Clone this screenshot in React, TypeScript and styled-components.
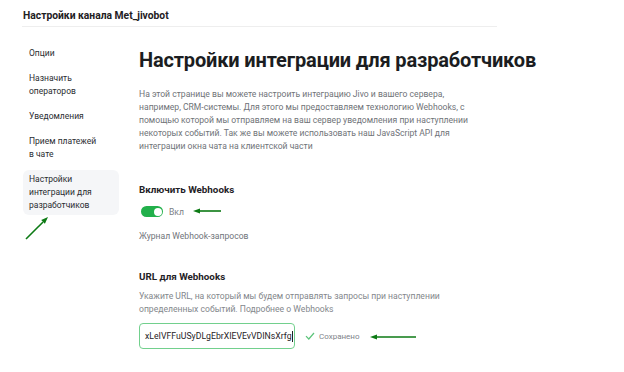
import styled, { createGlobalStyle } from 'styled-components';

const GlobalStyle = createGlobalStyle`
  html, body {
    margin: 0;
    padding: 0;
    background: #ffffff;
    font-family: Roboto, 'Liberation Sans', Arial, sans-serif;
  }
`;

const Page = styled.div`
  width: 624px;
  height: 372px;
  overflow: hidden;
  position: relative;
`;

const TopBar = styled.div`
  margin-left: 22px;
  width: 475px;
  height: 27px;
  box-sizing: border-box;
  padding: 10px 0 0 1px;
  border-bottom: 1px solid #eeeeee;
  font-size: 10.3px;
  line-height: 12px;
  font-weight: 700;
  color: #1e2023;
`;

const Body = styled.div`
  display: flex;
  gap: 20px;
  padding-left: 23px;
`;

const Sidebar = styled.nav`
  width: 96px;
  padding-top: 16.5px;
  display: flex;
  flex-direction: column;
  gap: 6px;
`;

const NavItem = styled.div<{ $active?: boolean }>`
  padding: 3px 6px;
  border-radius: 6px;
  font-size: 8.5px;
  line-height: 13px;
  color: #2a2d31;
  background: ${(p) => (p.$active ? '#f5f6f8' : 'transparent')};
`;

const Main = styled.main`
  flex: 1;
  padding-top: 21px;
`;

const Title = styled.h1`
  margin: 0;
  font-size: 20px;
  letter-spacing: -0.15px;
  line-height: 24px;
  font-weight: 700;
  color: #1b1d21;
`;

const Lead = styled.p`
  margin: 16px 0 0;
  width: 335px;
  font-size: 8.6px;
  line-height: 13px;
  color: #6f7378;
`;

const Section = styled.section<{ $top: number }>`
  margin-top: ${(p) => p.$top}px;
`;

const SectionTitle = styled.div`
  font-size: 9.8px;
  line-height: 13px;
  font-weight: 700;
  color: #1f2226;
`;

const Row = styled.div`
  display: flex;
  align-items: center;
  margin-top: 10px;
`;

const Switch = styled.span`
  width: 22px;
  height: 11px;
  border-radius: 6px;
  background: #22b04b;
  position: relative;
  margin-left: 2px;
  &::after {
    content: '';
    position: absolute;
    right: 1.5px;
    top: 1.5px;
    width: 8px;
    height: 8px;
    border-radius: 50%;
    background: #ffffff;
  }
`;

const SwitchLabel = styled.span`
  margin-left: 6px;
  font-size: 8.6px;
  color: #7a7e84;
`;

const LinkText = styled.div`
  margin-top: 13px;
  font-size: 8.6px;
  line-height: 13px;
  color: #70747a;
`;

const Hint = styled.p`
  margin: 7px 0 0;
  width: 330px;
  font-size: 8.6px;
  line-height: 13px;
  color: #83878c;
`;

const InputRow = styled.div`
  display: flex;
  align-items: center;
  margin-top: 7px;
`;

const Input = styled.div`
  width: 156px;
  height: 26px;
  box-sizing: border-box;
  border: 1.5px solid #72d08d;
  border-radius: 4px;
  padding: 0 0 0 5px;
  display: flex;
  align-items: center;
  font-size: 8.7px;
  color: #1f2226;
  white-space: nowrap;
  overflow: hidden;
`;

const Caret = styled.span`
  display: inline-block;
  width: 1px;
  height: 11px;
  background: #1f2226;
`;

const Saved = styled.span`
  display: flex;
  align-items: center;
  gap: 4px;
  margin-left: 10px;
  font-size: 8px;
  color: #80848a;
`;

const Overlay = styled.svg`
  position: absolute;
  left: 0;
  top: 0;
  pointer-events: none;
`;

const Arrow = ({ x1, y1, x2, y2 }: { x1: number; y1: number; x2: number; y2: number }) => {
  const ang = Math.atan2(y2 - y1, x2 - x1);
  const len = 7;
  const w = 2.6;
  const bx = x2 - Math.cos(ang) * len;
  const by = y2 - Math.sin(ang) * len;
  const px = -Math.sin(ang) * w;
  const py = Math.cos(ang) * w;
  return (
    <g>
      <line x1={x1} y1={y1} x2={bx} y2={by} stroke="#0c7a14" strokeWidth="1.6" />
      <polygon points={`${x2},${y2} ${bx + px},${by + py} ${bx - px},${by - py}`} fill="#0c7a14" />
    </g>
  );
};

export default function App() {
  return (
    <Page>
      <GlobalStyle />
      <TopBar>Настройки канала Met_jivobot</TopBar>
      <Body>
        <Sidebar>
          <NavItem>Опции</NavItem>
          <NavItem>
            Назначить
            <br />
            операторов
          </NavItem>
          <NavItem>Уведомления</NavItem>
          <NavItem>
            Прием платежей
            <br />в чате
          </NavItem>
          <NavItem $active>
            Настройки
            <br />
            интеграции для
            <br />
            разработчиков
          </NavItem>
        </Sidebar>
        <Main>
          <Title>Настройки интеграции для разработчиков</Title>
          <Lead>
            На этой странице вы можете настроить интеграцию Jivo и вашего сервера, например, CRM-системы. Для этого мы
            предоставляем технологию Webhooks, с помощью которой мы отправляем на ваш сервер уведомления при наступлении
            некоторых событий. Так же вы можете использовать наш JavaScript API для интеграции окна чата на клиентской
            части
          </Lead>
          <Section $top={30}>
            <SectionTitle>Включить Webhooks</SectionTitle>
            <Row>
              <Switch />
              <SwitchLabel>Вкл</SwitchLabel>
            </Row>
            <LinkText>Журнал Webhook-запросов</LinkText>
          </Section>
          <Section $top={27}>
            <SectionTitle>URL для Webhooks</SectionTitle>
            <Hint>
              Укажите URL, на который мы будем отправлять запросы при наступлении определенных событий. Подробнее о
              Webhooks
            </Hint>
            <InputRow>
              <Input>
                xLeIVFFuUSyDLgEbrXIEVEvVDINsXrfg
                <Caret />
              </Input>
              <Saved>
                <svg width="10" height="8" viewBox="0 0 10 8">
                  <path d="M1 4.2 L3.8 7 L9 1" fill="none" stroke="#5cc47a" strokeWidth="1.2" />
                </svg>
                Сохранено
              </Saved>
            </InputRow>
          </Section>
        </Main>
      </Body>
      <Overlay width="624" height="372">
        <Arrow x1={26} y1={239} x2={48} y2={217} />
        <Arrow x1={221} y1={211} x2={193} y2={211} />
        <Arrow x1={416} y1={337} x2={370} y2={337} />
      </Overlay>
    </Page>
  );
}
